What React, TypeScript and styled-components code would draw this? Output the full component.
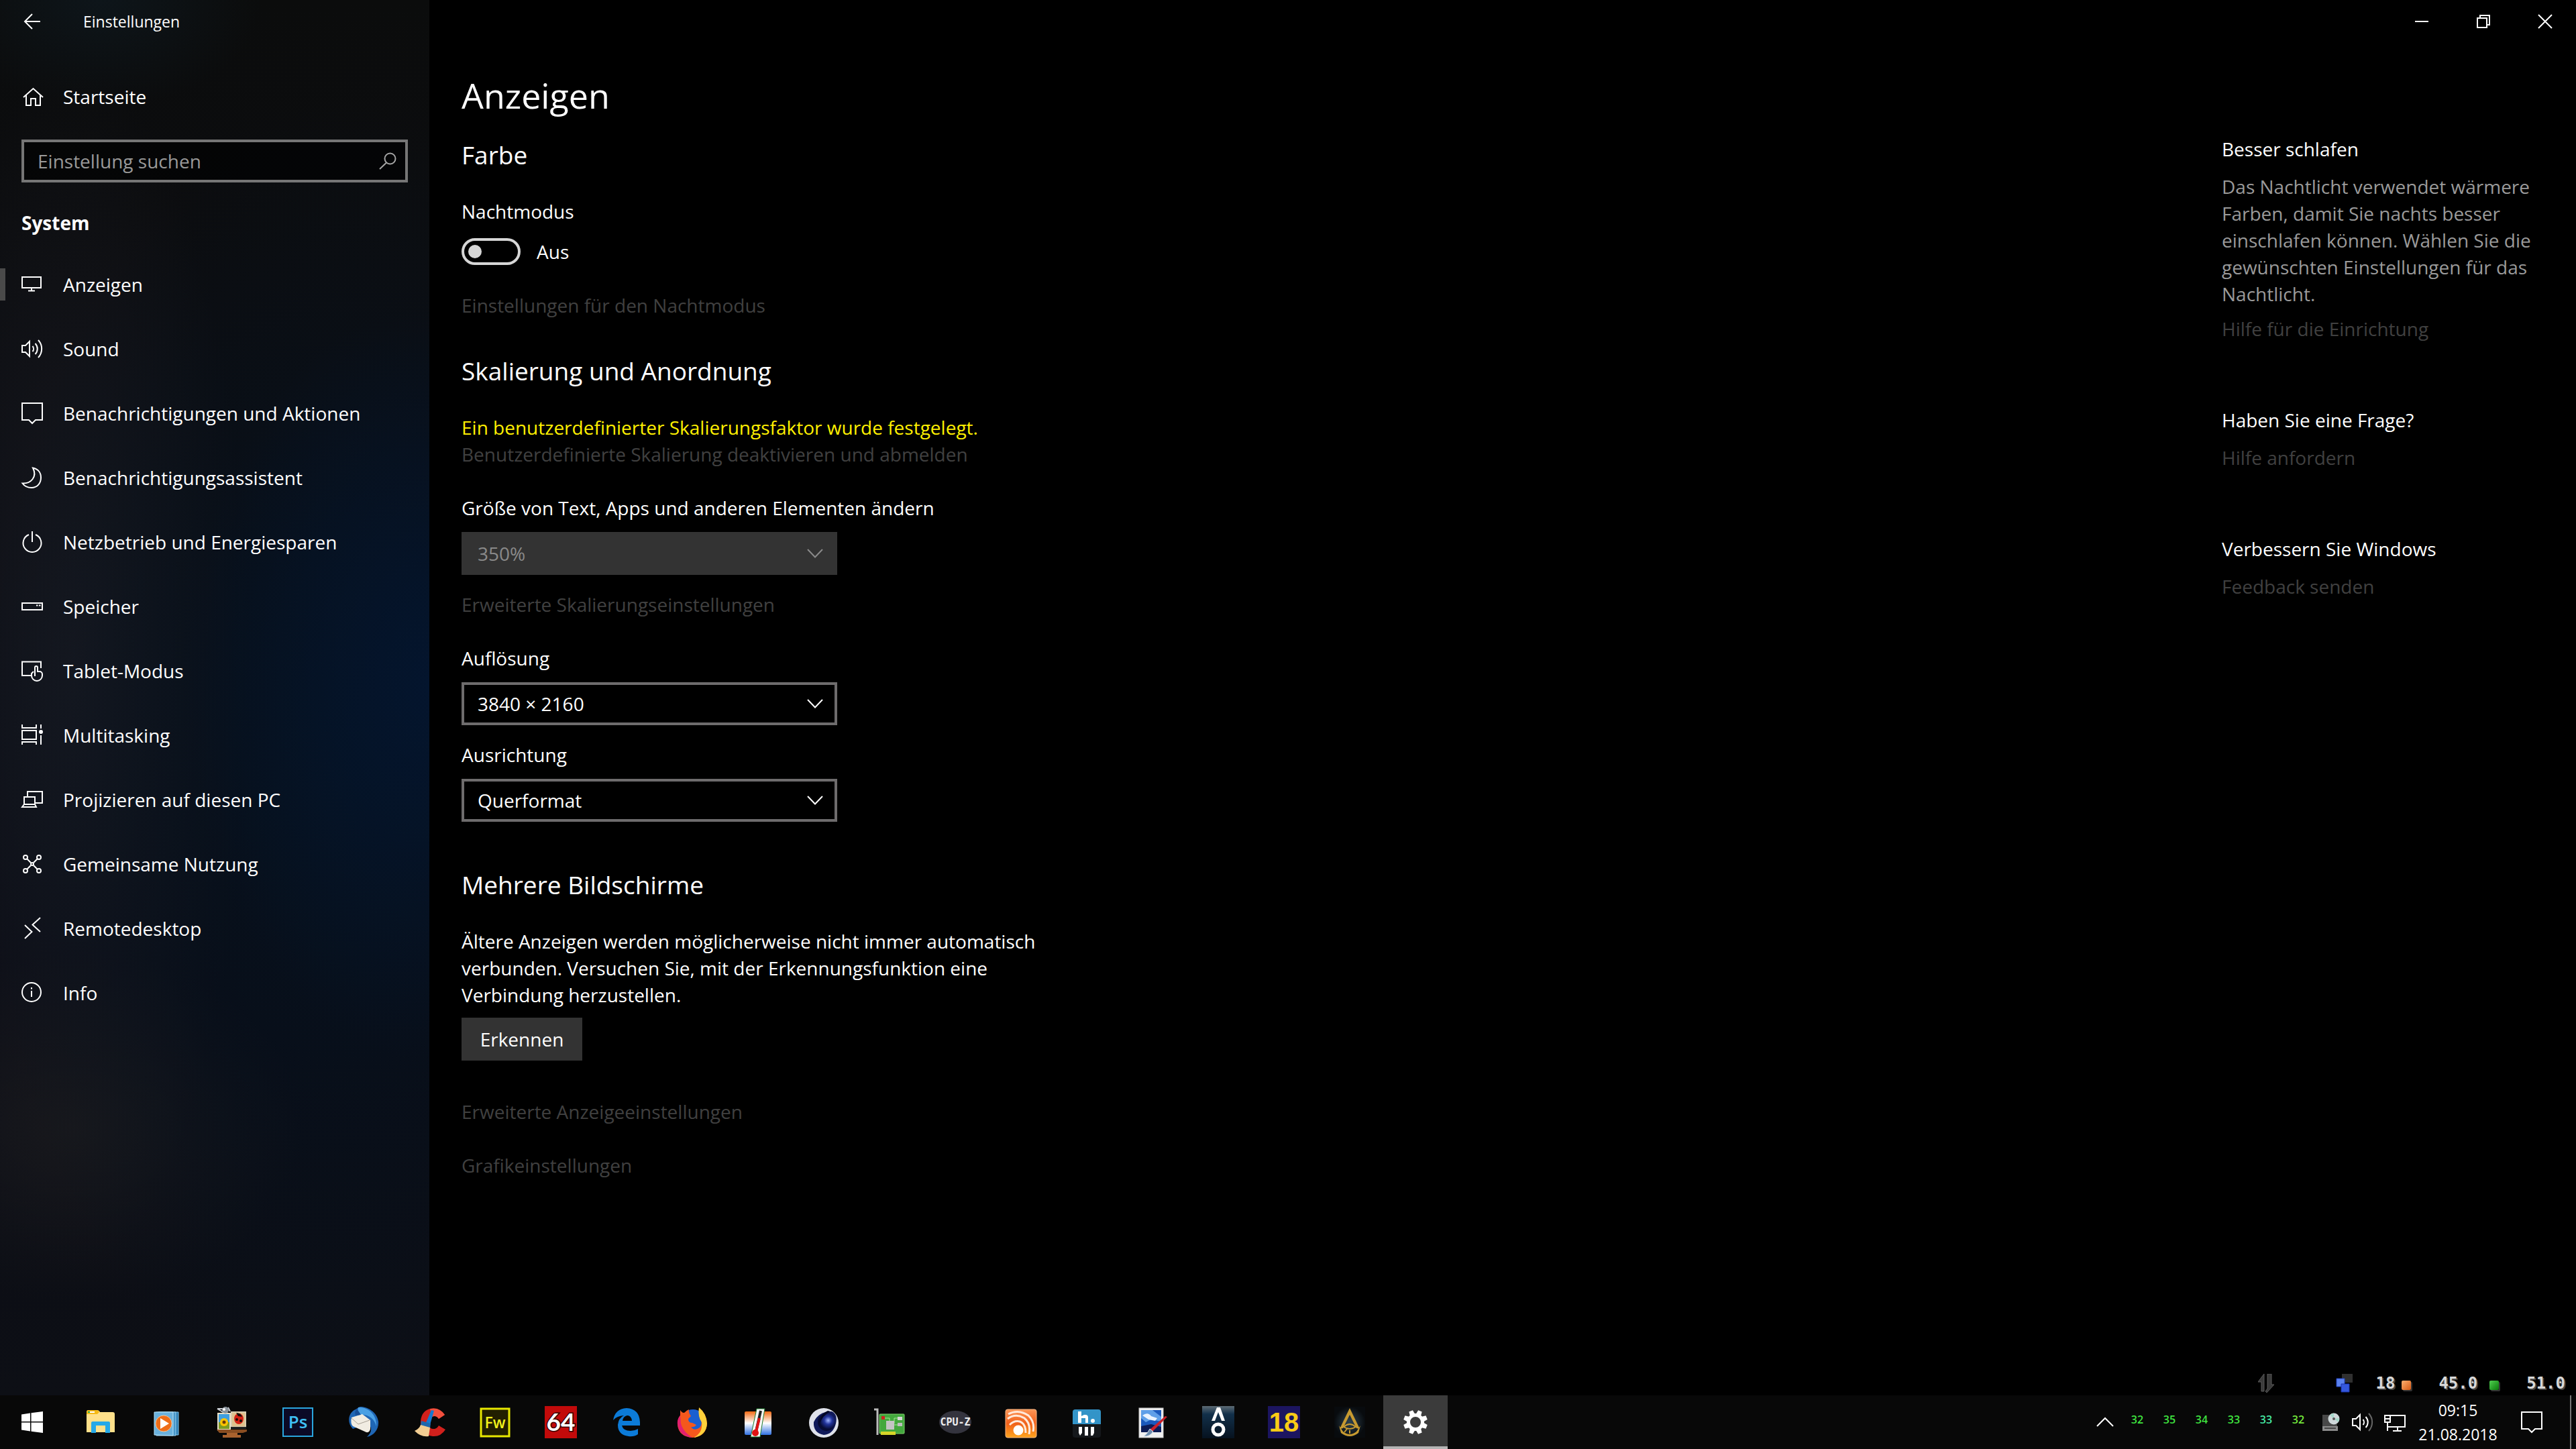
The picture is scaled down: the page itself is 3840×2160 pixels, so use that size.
import React, { useState } from 'react';
import styled, { createGlobalStyle, css } from 'styled-components';

const GlobalStyle = createGlobalStyle`
  * { box-sizing: border-box; }
  html, body, #root { height: 100%; }
  body {
    margin: 0;
    background: #000;
    color: #fff;
    font-family: "Open Sans", "Noto Sans", sans-serif;
    font-size: 28px;
    line-height: 40px;
    overflow: hidden;
  }
  button, input, select { font: inherit; color: inherit; margin: 0; }
  h1, h2, h3, p { margin: 0; font-weight: 400; }
  svg { display: block; flex: none; }
`;

/* ---------- Window frame ---------- */

const Desktop = styled.div`
  display: flex;
  flex-direction: column;
  height: 100vh;
`;

const Window = styled.div`
  flex: 1;
  min-height: 0;
  display: grid;
  grid-template-columns: 640px 1fr;
`;

const Sidebar = styled.aside`
  display: flex;
  flex-direction: column;
  background:
    radial-gradient(ellipse 360px 560px at 640px 1020px, rgba(3, 22, 50, 0.8), transparent),
    radial-gradient(ellipse 560px 1000px at 520px 1150px, rgba(5, 19, 33, 0.75), transparent),
    radial-gradient(ellipse 340px 260px at 110px 1680px, rgba(27, 27, 30, 0.75), transparent),
    radial-gradient(ellipse 260px 900px at 110px 1000px, rgba(27, 28, 35, 0.75), transparent),
    radial-gradient(ellipse 240px 160px at 150px 0, rgba(15, 25, 32, 0.7), transparent),
    linear-gradient(#0b0c0c, #0c0d10 20%, #0a0d15 50%, #0a0c15 75%, #0d0f15);
`;

const TitleBar = styled.header`
  display: flex;
  align-items: center;
  height: 64px;
  flex: none;
`;

const WindowTitle = styled.span`
  margin-left: 28px;
  font-size: 23px;
`;

const FrameButton = styled.button<{ $width: number }>`
  display: flex;
  align-items: center;
  justify-content: center;
  width: ${p => p.$width}px;
  height: 64px;
  padding: 0;
  border: 0;
  background: none;
`;

const WindowControls = styled(TitleBar)`
  justify-content: flex-end;
`;

/* ---------- Sidebar navigation ---------- */

const NavLink = styled.a<{ $current?: boolean; $height: number }>`
  display: flex;
  align-items: center;
  gap: 30px;
  height: ${p => p.$height}px;
  padding-left: 32px;
  color: #fff;
  text-decoration: none;
  ${p => p.$current && css`
    background: linear-gradient(#4a4a4a, #4a4a4a) left center / 8px 48px no-repeat;
  `}
`;

const HomeArea = styled.div`
  padding: 48px 0 32px;
`;

const SearchBox = styled.label`
  display: flex;
  align-items: center;
  height: 64px;
  margin: 0 32px 40px;
  padding: 0 14px 0 20px;
  border: 4px solid #767676;
  background: rgba(0, 0, 0, 0.6);
`;

const SearchInput = styled.input`
  flex: 1;
  min-width: 0;
  padding: 0;
  border: 0;
  outline: 0;
  background: none;
  &::placeholder { color: #999; opacity: 1; }
`;

const NavHeading = styled.h2`
  margin: 0 32px 24px;
  font-size: 28px;
  font-weight: 700;
`;

/* ---------- Main pane ---------- */

const Main = styled.main`
  display: flex;
  flex-direction: column;
  min-width: 0;
`;

const Columns = styled.div`
  flex: 1;
  display: flex;
  justify-content: space-between;
  padding: 42px 48px 0;
`;

const Settings = styled.div`
  width: 880px;
`;

const PageTitle = styled.h1`
  font-size: 52px;
  line-height: 72px;
`;

const Section = styled.section<{ $top: number }>`
  margin-top: ${p => p.$top}px;
`;

const SectionTitle = styled.h2`
  margin-bottom: 40px;
  font-size: 37px;
  line-height: 48px;
`;

const Field = styled.div<{ $top?: number; $gap?: number }>`
  display: flex;
  flex-direction: column;
  gap: ${p => p.$gap || 16}px;
  margin-top: ${p => p.$top || 0}px;
`;

const Warning = styled.p`
  color: #fff000;
`;

const MutedLink = styled.a<{ $top?: number }>`
  display: block;
  margin-top: ${p => p.$top || 0}px;
  color: #404040;
  text-decoration: none;
`;

const ToggleRow = styled.label`
  display: flex;
  align-items: center;
  gap: 24px;
  height: 40px;
`;

const Toggle = styled.input`
  appearance: none;
  display: flex;
  align-items: center;
  width: 88px;
  height: 40px;
  padding: 0 6px;
  border: 4px solid #d6d6d6;
  border-radius: 20px;
  &::before {
    content: "";
    width: 20px;
    height: 20px;
    border-radius: 50%;
    background: #d6d6d6;
  }
  &:checked { justify-content: flex-end; }
`;

const SelectFrame = styled.div<{ $disabled?: boolean }>`
  display: grid;
  align-items: center;
  width: 560px;
  height: 64px;
  color: ${p => (p.$disabled ? '#8a8a8a' : '#fff')};
  border: 4px solid ${p => (p.$disabled ? '#333' : '#6e6c6d')};
  background: ${p => (p.$disabled ? '#333' : '#000')};
  > * { grid-area: 1 / 1; }
  > svg { justify-self: end; margin-right: 17px; pointer-events: none; }
`;

const SelectControl = styled.select`
  appearance: none;
  width: 100%;
  height: 56px;
  padding: 0 56px 0 20px;
  border: 0;
  outline: 0;
  background: none;
  opacity: 1;
`;

const ActionButton = styled.button`
  width: 180px;
  height: 64px;
  margin-top: 14px;
  padding: 0;
  border: 0;
  background: #333;
`;

const HelpColumn = styled.aside`
  width: 480px;
  padding-top: 96px;
`;

const HelpBlock = styled.section`
  margin-bottom: 96px;
`;

const HelpTitle = styled.h3`
  font-size: 28px;
`;

const HelpText = styled.p`
  margin: 16px 0 12px;
  color: #9a9a9a;
`;

/* ---------- Sensor strip above the taskbar ---------- */

const SensorStrip = styled.div`
  display: flex;
  align-items: center;
  justify-content: flex-end;
  height: 36px;
  padding-right: 16px;
  font: 700 24px/36px "DejaVu Sans Mono", monospace;
  color: #d8d8d8;
  text-shadow: 2px 2px 0 #444;
`;

const Sensor = styled.div<{ $left: number; $gap: number }>`
  display: flex;
  align-items: center;
  gap: ${p => p.$gap}px;
  margin-left: ${p => p.$left}px;
`;

const Led = styled.span<{ $from: string; $to: string }>`
  width: 14px;
  height: 14px;
  margin-top: 6px;
  border-radius: 2px;
  background: linear-gradient(135deg, ${p => p.$from}, ${p => p.$to});
  box-shadow: 2px 2px 0 #333;
`;

/* ---------- Taskbar ---------- */

const Taskbar = styled.footer`
  display: flex;
  justify-content: space-between;
  height: 80px;
  flex: none;
  background: #080808;
`;

const AppList = styled.div`
  display: flex;
  gap: 2px;
`;

const AppButton = styled.button<{ $active?: boolean; $start?: boolean }>`
  display: flex;
  align-items: center;
  justify-content: center;
  width: 96px;
  height: 80px;
  margin-right: ${p => (p.$start ? 4 : 0)}px;
  padding: 0;
  border: 0;
  background: ${p => (p.$active ? '#3b3b3b' : 'none')};
  box-shadow: ${p => (p.$active ? 'inset 0 -4px #b4b4b4' : 'none')};
`;

const Tray = styled.div`
  display: flex;
`;

const TrayButton = styled.button<{ $width: number }>`
  display: flex;
  align-items: center;
  justify-content: center;
  width: ${p => p.$width}px;
  padding: 0;
  border: 0;
  background: none;
`;

const Temperature = styled.span<{ $color: string }>`
  width: 48px;
  padding-top: 16px;
  text-align: center;
  color: ${p => p.$color};
  font-size: 16px;
  font-weight: 600;
`;

const Clock = styled.time`
  display: flex;
  flex-direction: column;
  justify-content: center;
  width: 140px;
  text-align: center;
  font-size: 23px;
  line-height: 36px;
`;

const ShowDesktop = styled.button`
  width: 9px;
  margin-left: 17px;
  padding: 0;
  border: 0;
  border-left: 2px solid #777;
  background: none;
`;

/* ---------- Line icons ---------- */

function Line({ size = 32, height, children }: { size?: number; height?: number; children: React.ReactNode }) {
  return (
    <svg width={size} height={height || size} viewBox={`0 0 ${size} ${height || size}`} fill="none"
      stroke="currentColor" strokeWidth="2" overflow="visible" aria-hidden="true">
      {children}
    </svg>
  );
}

const Chevron = () => <Line size={24} height={14}><path d="M1 1 12 12.500 23 1" /></Line>;

const bubble = <path d="M1 1H31V26H21L16 31 11 26H1Z" />;

const navItems: { label: string; icon: React.ReactNode }[] = [
  { label: 'Anzeigen', icon: <path d="M1 5H29V21H1ZM15 21V25M10 25.500H20" /> },
  {
    label: 'Sound',
    icon: <path d="M1 11H6L12 5V27L6 21H1ZM16.500 12A6 6 0 0 1 16.500 20M20.500 8A11.500 11.500 0 0 1 20.500 24M25 3A19 19 0 0 1 25 29" />,
  },
  { label: 'Benachrichtigungen und Aktionen', icon: bubble },
  { label: 'Benachrichtigungsassistent', icon: <path d="M17 1.500C25 3 29 9 29 16 29 25 23 31 15 31 9 31 4 28 1.500 24.500 14 25 24 15 17 1.500Z" /> },
  { label: 'Netzbetrieb und Energiesparen', icon: <path d="M11 5A13.500 13.500 0 1 0 21 5M16 0V16" /> },
  { label: 'Speicher', icon: <path d="M1 11H31V21H1ZM22 14.500H24.500M26 14.500H28.500" /> },
  {
    label: 'Tablet-Modus',
    icon: <path d="M14 23H1V2.500H29V12M20 24V11A2 2 0 0 1 24 11V17H27A4 4 0 0 1 31 21V23A8 8 0 0 1 15 23V20L18 17" />,
  },
  {
    label: 'Multitasking',
    icon: <><path d="M1 0V5H22V0M1 9H22V22H1ZM1 30V26H22V30M29 0V6M29 16V30" /><circle cx="29" cy="11" r="2" fill="currentColor" /></>,
  },
  { label: 'Projizieren auf diesen PC', icon: <path d="M9 11V4H31V21H21M4 23V12H20V23M1 27 4 23H20L22 27Z" /> },
  {
    label: 'Gemeinsame Nutzung',
    icon: <><circle cx="6" cy="6" r="3" /><circle cx="26" cy="6" r="3" /><circle cx="6" cy="26" r="3" /><circle cx="26" cy="26" r="3" /><circle cx="16" cy="16" r="2" /><path d="M8 8 14 14M24 8 18 14M8 24 14 18M24 24 18 18" /></>,
  },
  { label: 'Remotedesktop', icon: <path d="M5 11 15.500 21 5 31M28 0 16.500 10.500 28 21" /> },
  { label: 'Info', icon: <><circle cx="15" cy="15" r="14" /><path d="M15 13V22M15 8V10.500" /></> },
];

/* ---------- Taskbar app artwork ---------- */

const Art = ({ children }: { children: React.ReactNode }) => (
  <svg width="48" height="48" viewBox="0 0 48 48" aria-hidden="true">{children}</svg>
);

const TileText = ({ fill, size = 24, y = 33, children, family = 'Open Sans', weight = 600, stroke }:
  { fill: string; size?: number; y?: number; children: string; family?: string; weight?: number; stroke?: string }) => (
  <text x="24" y={y} textAnchor="middle" fill={fill} fontFamily={`"${family}", sans-serif`} fontSize={size} fontWeight={weight}
    stroke={stroke} strokeWidth={stroke ? 3 : 0} paintOrder="stroke">{children}</text>
);

const apps: { name: string; art: React.ReactNode }[] = [
  {
    name: 'Explorer',
    art: <Art><path d="M3 9Q3 6 6 6H18Q22 6 23 9H42Q45 9 45 12V39H3Z" fill="#ffe08a" /><path d="M3 9Q3 6 6 6H18Q21 6 22 9L19 12H3Z" fill="#f5b916" /><path d="M5 8H15V10H5Z" fill="#fff" /><path d="M5 8H8V10H5Z" fill="#27b45a" /><path d="M10 25Q10 23 12 23H36Q38 23 38 25V40H31V29H17V40H10Z" fill="#26a9e8" /></Art>,
  },
  {
    name: 'Media Player',
    art: <Art><path d="M12 9H42V43H12Z" fill="#2d7eb5" stroke="#7fc4ea" /><path d="M9 9H38V44H9Z" fill="#4796c9" stroke="#9bd2f0" /><path d="M6 9H34V44L6 43Z" fill="#69b1dd" stroke="#b7e2f7" /><circle cx="20" cy="26" r="12" fill="#ee6d18" stroke="#ffc08a" /><path d="M15 18 28 26 15 34Z" fill="#fff" /></Art>,
  },
  {
    name: 'Fotoanzeige',
    art: <Art><path d="M2 4 12 10M18 2 21 8M2 4H14" stroke="#c8ccd2" strokeWidth="2" fill="none" /><path d="M2 10H22V37H2Z" fill="#e8e0c8" /><path d="M4 12H20V34H4Z" fill="#3f9fe0" /><path d="M4 24H20V34H4Z" fill="#7d9b22" /><circle cx="12" cy="24" r="6" fill="#ffc400" /><circle cx="12" cy="24" r="2.500" fill="#6b3a08" /><path d="M22 8H45V34H22Z" fill="#d8ccb0" /><path d="M24 10H43V30H24Z" fill="#dfc08c" /><ellipse cx="34" cy="19" rx="7" ry="8" fill="#d42114" /><path d="M30 10Q37 10 39 16L33 15Z" fill="#15100d" /><circle cx="31" cy="20" r="2" fill="#1a0d0a" /><circle cx="37" cy="22" r="2" fill="#1a0d0a" /><path d="M22 31H45V34H22Z" fill="#222" /><path d="M1 35H46V38L40 40H5Z" fill="#8a4e22" /><path d="M16 40H32V43H37V47H10V43H16Z" fill="#a9622e" /><circle cx="14" cy="6" r="5" fill="#8b949c" /><circle cx="12" cy="5" r="2" fill="#fff" /></Art>,
  },
  {
    name: 'Photoshop',
    art: <Art><rect x="2" y="3" width="44" height="42" fill="#0b0a26" stroke="#2aa6de" strokeWidth="2" /><TileText fill="#3fc0f2" size={26}>Ps</TileText></Art>,
  },
  {
    name: 'Thunderbird',
    art: <Art><path d="M19 1C29 1 44 8 46 23 47 34 40 44 29 46 38 38 36 30 30 26L8 34C-2 24 2 9 12 5 16 3 15 2 19 1Z" fill="#1f66b5" /><path d="M16 2C30 1 44 12 43 30 40 19 32 11 15 13Z" fill="#4aa0e4" /><path d="M6 17 22 12 34 21V34Q33 40 28 39L8 30Q4 26 6 17Z" fill="#f1ece2" /><path d="M6 18 16 27 33 21" fill="none" stroke="#a79f94" /><path d="M14 4Q10 8 12 14L20 13Z" fill="#184f97" /></Art>,
  },
  {
    name: 'CCleaner',
    art: <Art><path d="M47 13 38 19Q34 13 28 16 22 20 23 27 24 35 32 34 36 33 38 29L48 35Q41 46 29 45 13 43 11 28 10 8 25 4 39 1 47 13Z" fill="#d1201c" /><path d="M25 4Q39 1 47 13L38 19Q34 13 28 16Z" fill="#f1503e" /><path d="M27 6 31 7 25 28 18 27Z" fill="#1679cf" /><path d="M12 22 26 26 25 33 11 29Z" fill="#1e66ad" /><path d="M11 28 25 32 23 45Q12 47 2 37 9 34 11 28Z" fill="#f2cd93" /></Art>,
  },
  {
    name: 'Fireworks',
    art: <Art><rect x="3" y="4" width="42" height="41" fill="#221f00" stroke="#e8e800" strokeWidth="3" /><TileText fill="#f2f21c" size={23}>Fw</TileText></Art>,
  },
  {
    name: 'AIDA64',
    art: <Art><rect width="48" height="48" fill="#c20a0a" /><TileText fill="#fff" size={37} y={37} family="Lato" weight={700} stroke="#3a0000">64</TileText></Art>,
  },
  {
    name: 'Edge',
    art: <Art><path d="M4 21Q7 4 24 3 43 4 44 24V29H17Q19 37 30 37 36 37 41 34V42Q35 46 27 45 11 43 11 28 12 18 20 14 9 15 4 21ZM18 22H32Q31 14 25 14 19 15 18 22Z" fill="#0c7bd8" fillRule="evenodd" /></Art>,
  },
  {
    name: 'Firefox',
    art: <Art><circle cx="25" cy="23" r="18" fill="#1a5fd0" /><path d="M6 6Q8 10 12 10 16 6 19 5 18 10 22 15L18 19Q18 25 24 25L30 28Q27 32 22 31 27 38 35 32 39 28 37 22 33 12 34 3 45 10 46 26 45 45 25 47 3 46 2 27 2 18 6 14Z" fill="#f4581d" /><path d="M34 2Q45 11 46 26 45 44 26 47 40 40 38 24 32 16 34 2Z" fill="#ffd13b" /><path d="M6 14Q1 20 2 27 4 45 24 47 10 38 7 26Z" fill="#e3206f" /></Art>,
  },
  {
    name: 'Core Temp',
    art: <Art><defs><linearGradient id="temp" x2="0" y2="1"><stop stopColor="#f46a14" /><stop offset=".5" stopColor="#fff" /><stop offset="1" stopColor="#2f70e2" /></linearGradient></defs><rect x="4" y="8" width="40" height="35" rx="2" fill="url(#temp)" /><path d="M22 4H34L27 46H13Z" fill="#f7f7f7" stroke="#1c7a2c" /><path d="M28 7 21 38" stroke="#222" strokeWidth="4" /><path d="M26 18 21 38" stroke="#e01414" strokeWidth="4" /><circle cx="20" cy="40" r="5" fill="#e01414" /></Art>,
  },
  {
    name: 'Cinema 4D',
    art: <Art><defs><radialGradient id="c4d" cx=".6" cy=".4"><stop stopColor="#9fb4ff" /><stop offset=".45" stopColor="#22349c" /><stop offset="1" stopColor="#060b33" /></radialGradient></defs><circle cx="24" cy="25" r="22" fill="#dfe2ea" /><path d="M36 8Q16 8 9 24 8 40 24 43 38 42 42 26 45 12 36 8Z" fill="#101a5a" /><circle cx="28" cy="24" r="13" fill="url(#c4d)" /><path d="M34 8Q22 14 18 26 18 12 30 7Z" fill="#000624" /></Art>,
  },
  {
    name: 'GPU-Z',
    art: <Art><path d="M1 5H6V43" fill="none" stroke="#bcbcbc" strokeWidth="3" /><rect x="9" y="12" width="37" height="29" rx="1" fill="#43a83d" stroke="#7ed36d" /><path d="M11 38H33V43H11Z" fill="#d6d528" /><path d="M15 18H24V24M38 18H31V26M38 28H30" stroke="#a7ec94" fill="none" /><rect x="19" y="22" width="12" height="13" fill="#c4c4c4" /><rect x="12" y="15" width="5" height="5" fill="#cc2420" /><rect x="36" y="16" width="7" height="5" fill="#d6d6d6" /><rect x="36" y="25" width="7" height="5" fill="#bdbdbd" /></Art>,
  },
  {
    name: 'CPU-Z',
    art: <Art><ellipse cx="24" cy="24" rx="24" ry="17" fill="#34343e" /><TileText fill="#eee" size={15} y={29} family="DejaVu Sans Mono" weight={700}>CPU-Z</TileText></Art>,
  },
  {
    name: 'RSS',
    art: <Art><defs><linearGradient id="rss" x2="0" y2="1"><stop stopColor="#ff9656" /><stop offset=".5" stopColor="#f0601a" /><stop offset="1" stopColor="#ffa51e" /></linearGradient></defs><rect x="1" y="5" width="46" height="42" rx="3" fill="url(#rss)" stroke="#ffb985" /><circle cx="20" cy="36" r="7.500" fill="#fff" /><path d="M7 28Q14 21 22 23 31 26 31 40M4 19Q16 10 29 18 39 26 36 42M5 12Q20 4 35 14 45 24 42 38" stroke="#ffe9da" strokeWidth="3" fill="none" /></Art>,
  },
  {
    name: 'HWiNFO',
    art: <Art><rect x="3" y="5" width="42" height="42" rx="4" fill="#15181b" /><path d="M7 5H41Q45 5 45 9V27H3V9Q3 5 7 5Z" fill="#3394c8" /><path d="M11 8H16V25H11ZM20 13H22Q26 13 26 17V25H22V18H16V15Z" fill="#fff" /><circle cx="33" cy="22" r="3" fill="#fff" /><path d="M12 31H17V40L14 44 12 40ZM21 31H26V44H21ZM30 31H35V40L33 44 30 44Z" fill="#fff" /></Art>,
  },
  {
    name: 'Bildbearbeitung',
    art: <Art><rect x="4" y="3" width="36" height="44" fill="#f0f0f0" stroke="#c8c8c8" /><rect x="7" y="6" width="30" height="33" fill="#1a59bd" /><path d="M7 6H24L37 16V23L22 20 14 24 7 18Z" fill="#5f9fe8" /><path d="M9 14Q17 8 22 15L31 18 28 22 18 20Z" fill="#eaf3ff" /><path d="M7 30 22 27 37 31V39H7Z" fill="#0c1c56" /><path d="M46 16 24 38 20 35 43 15Z" fill="#c9202a" /><path d="M20 34 25 38Q20 46 11 45 17 41 20 34Z" fill="#6d8cae" stroke="#dbe5ec" /></Art>,
  },
  {
    name: 'AO Tennis',
    art: <Art><defs><linearGradient id="ao" x2="0" y2="1"><stop stopColor="#5d6b74" /><stop offset=".25" stopColor="#12304a" /><stop offset="1" stopColor="#06121f" /></linearGradient></defs><rect width="48" height="48" fill="url(#ao)" /><path d="M14 22 22 2H27L34 22H29L24 9 19 22Z" fill="#fff" /><circle cx="24" cy="35" r="8" fill="none" stroke="#fff" strokeWidth="5" /></Art>,
  },
  {
    name: 'Fußball 18',
    art: <Art><rect width="48" height="48" fill="#1c1560" /><TileText fill="#f9cb16" size={40} y={38} family="Liberation Sans Narrow" weight={700}>18</TileText></Art>,
  },
  {
    name: 'Assassin’s Creed',
    art: <Art><defs><radialGradient id="ac"><stop stopColor="#2d4250" /><stop offset="1" stopColor="#080b0e" /></radialGradient></defs><rect x="1" y="1" width="46" height="46" fill="url(#ac)" /><path d="M24 3 39 34 34 33 24 13 14 33 9 34ZM8 29 14 38Q24 46 34 38L40 29 37 40Q24 50 11 40Z" fill="#c79a30" /><path d="M15 31Q24 23 33 31 24 37 15 31ZM24 36V41M20 34 16 39" fill="none" stroke="#c79a30" strokeWidth="2" /></Art>,
  },
];

const Gear = () => (
  <Art>
    <circle cx="24" cy="24" r="10.500" fill="none" stroke="#fff" strokeWidth="5" />
    {[0, 1, 2, 3, 4, 5, 6, 7].map(i => (
      <path key={i} d="M21 6H27L28 13H20Z" fill="#fff" transform={`rotate(${22.5 + i * 45} 24 24)`} />
    ))}
  </Art>
);

const temperatures: [string, string][] = [
  ['32', '#3fe23f'], ['35', '#3fe23f'], ['34', '#3fe23f'], ['33', '#3fe23f'], ['33', '#46e8a4'], ['32', '#74e83c'],
];

interface DropdownProps { id: string; label: string; value: string; disabled?: boolean; top?: number }

function Dropdown({ id, label, value, disabled, top }: DropdownProps) {
  return (
    <Field $top={top}>
      <label htmlFor={id}>{label}</label>
      <SelectFrame $disabled={disabled}>
        <SelectControl id={id} disabled={disabled} defaultValue={value}>
          <option>{value}</option>
        </SelectControl>
        <Chevron />
      </SelectFrame>
    </Field>
  );
}

export default function App() {
  const [night, setNight] = useState(false);

  return (
    <Desktop>
      <GlobalStyle />
      <Window>
        <Sidebar>
          <TitleBar>
            <FrameButton $width={96} aria-label="Zurück">
              <Line size={24}><path d="M24 12H1M12 1 1 12 12 23" /></Line>
            </FrameButton>
            <WindowTitle>Einstellungen</WindowTitle>
          </TitleBar>
          <HomeArea>
            <NavLink href="#start" $height={64}>
              <Line><path d="M3 17 17.500 4 32 17M7 14V29H14V19H21V29H28V14" /></Line>
              Startseite
            </NavLink>
          </HomeArea>
          <SearchBox>
            <SearchInput type="text" placeholder="Einstellung suchen" aria-label="Einstellung suchen" />
            <svg width="24" height="24" fill="none" stroke="#a6a6a6" strokeWidth="2" overflow="visible" aria-hidden="true">
              <circle cx="15.500" cy="8.500" r="8" /><path d="M10 14.500 0 24" />
            </svg>
          </SearchBox>
          <NavHeading>System</NavHeading>
          <nav>
            {navItems.map((item, i) => (
              <NavLink key={item.label} href={`#${i}`} $height={96} $current={i === 0}>
                <Line>{item.icon}</Line>
                {item.label}
              </NavLink>
            ))}
          </nav>
        </Sidebar>

        <Main>
          <WindowControls>
            <FrameButton $width={92} aria-label="Minimieren"><Line size={20}><path d="M0 10H20" /></Line></FrameButton>
            <FrameButton $width={92} aria-label="Verkleinern"><Line size={20}><path d="M1 5H15V19H1ZM5 5V1H19V15H15" /></Line></FrameButton>
            <FrameButton $width={92} aria-label="Schließen"><Line size={20}><path d="M0 0 20 20M20 0 0 20" /></Line></FrameButton>
          </WindowControls>

          <Columns>
            <Settings>
              <PageTitle>Anzeigen</PageTitle>

              <Section $top={29}>
                <SectionTitle>Farbe</SectionTitle>
                <Field $gap={20}>
                  <span id="night-label">Nachtmodus</span>
                  <ToggleRow>
                    <Toggle type="checkbox" role="switch" aria-labelledby="night-label" checked={night}
                      onChange={e => setNight(e.target.checked)} />
                    {night ? 'Ein' : 'Aus'}
                  </ToggleRow>
                </Field>
                <MutedLink href="#nacht" $top={40}>Einstellungen für den Nachtmodus</MutedLink>
              </Section>

              <Section $top={54}>
                <SectionTitle>Skalierung und Anordnung</SectionTitle>
                <Warning>Ein benutzerdefinierter Skalierungsfaktor wurde festgelegt.</Warning>
                <MutedLink href="#abmelden">Benutzerdefinierte Skalierung deaktivieren und abmelden</MutedLink>
                <Dropdown id="scale" label="Größe von Text, Apps und anderen Elementen ändern" value="350%" disabled top={40} />
                <MutedLink href="#skalierung" $top={24}>Erweiterte Skalierungseinstellungen</MutedLink>
                <Dropdown id="resolution" label="Auflösung" value="3840 × 2160" top={40} />
                <Dropdown id="orientation" label="Ausrichtung" value="Querformat" top={24} />
              </Section>

              <Section $top={70}>
                <SectionTitle>Mehrere Bildschirme</SectionTitle>
                <p>
                  Ältere Anzeigen werden möglicherweise nicht immer automatisch verbunden. Versuchen Sie, mit der
                  Erkennungsfunktion eine Verbindung herzustellen.
                </p>
                <ActionButton>Erkennen</ActionButton>
                <MutedLink href="#anzeige" $top={56}>Erweiterte Anzeigeeinstellungen</MutedLink>
                <MutedLink href="#grafik" $top={40}>Grafikeinstellungen</MutedLink>
              </Section>
            </Settings>

            <HelpColumn>
              <HelpBlock>
                <HelpTitle>Besser schlafen</HelpTitle>
                <HelpText>
                  Das Nachtlicht verwendet wärmere Farben, damit Sie nachts besser einschlafen können. Wählen Sie die
                  gewünschten Einstellungen für das Nachtlicht.
                </HelpText>
                <MutedLink href="#einrichtung">Hilfe für die Einrichtung</MutedLink>
              </HelpBlock>
              <HelpBlock>
                <HelpTitle>Haben Sie eine Frage?</HelpTitle>
                <MutedLink href="#hilfe" $top={16}>Hilfe anfordern</MutedLink>
              </HelpBlock>
              <HelpBlock>
                <HelpTitle>Verbessern Sie Windows</HelpTitle>
                <MutedLink href="#feedback" $top={16}>Feedback senden</MutedLink>
              </HelpBlock>
            </HelpColumn>
          </Columns>

          <SensorStrip>
            <svg width="24" height="28" aria-hidden="true">
              <path d="M0 12 9 0V26H5V12ZM14 0H20V16H24L13 28 11 26 14 22Z" fill="#3a3a3a" stroke="#5a5a5a" />
            </svg>
            <Sensor $left={92} $gap={34}>
              <svg width="26" height="28" aria-hidden="true">
                <path d="M9 0H25V13H9Z" fill="#303030" />
                <path d="M1 7H13V19H1Z" fill="#5a82f0" stroke="#2444c0" /><path d="M8 15H20V27H8Z" fill="#3558dc" stroke="#1a34b0" />
              </svg>
              18
            </Sensor>
            <Sensor $left={10} $gap={41}><Led $from="#ffb070" $to="#d85a14" />45.0</Sensor>
            <Sensor $left={18} $gap={41}><Led $from="#50d050" $to="#0a7a0a" />51.0</Sensor>
          </SensorStrip>
        </Main>
      </Window>

      <Taskbar>
        <AppList>
          <AppButton $start aria-label="Start">
            <svg width="32" height="32" fill="#fff" aria-hidden="true">
              <path d="M0 4.500 13 2.500V15H0ZM14.500 2.300 32 0V15H14.500ZM0 16.500H13V29.500L0 27.500ZM14.500 16.500H32V32L14.500 29.700Z" />
            </svg>
          </AppButton>
          {apps.map(app => <AppButton key={app.name} aria-label={app.name}>{app.art}</AppButton>)}
          <AppButton $active aria-label="Einstellungen"><Gear /></AppButton>
        </AppList>

        <Tray>
          <TrayButton $width={48} aria-label="Ausgeblendete Symbole"><Line size={26} height={14}><path d="M1 13 13 1 25 13" /></Line></TrayButton>
          {temperatures.map(([value, color], i) => <Temperature key={i} $color={color}>{value}</Temperature>)}
          <TrayButton $width={48} aria-label="Laufwerk">
            <svg width="28" height="28" aria-hidden="true">
              <path d="M2 3H20L24 19V27H2Z" fill="#484848" /><path d="M2 20H25V27H2Z" fill="#8c8c8c" /><path d="M5 23H22" stroke="#444" strokeWidth="2" />
              <circle cx="19" cy="9" r="8.500" fill="#cfd8da" /><path d="M19 9 13 3 19 .5ZM19 9 26 14 27 8Z" fill="#a5d8c9" /><circle cx="19" cy="9" r="2" fill="#555" />
            </svg>
          </TrayButton>
          <TrayButton $width={48} aria-label="Lautstärke">
            <Line><path d="M1 11H6L12 5V27L6 21H1ZM16.500 12A6 6 0 0 1 16.500 20M20.500 8A11.500 11.500 0 0 1 20.500 24" /><path d="M25 3A19 19 0 0 1 25 29" stroke="#666" /></Line>
          </TrayButton>
          <TrayButton $width={48} aria-label="Netzwerk">
            <Line><path d="M10 6H31V23H5M1 6H9V16H1ZM5 16V29M1 11H9M20 23V29M13 29H26" /></Line>
          </TrayButton>
          <Clock><span>09:15</span><span>21.08.2018</span></Clock>
          <TrayButton $width={80} aria-label="Info-Center"><Line>{bubble}</Line></TrayButton>
          <ShowDesktop aria-label="Desktop anzeigen" />
        </Tray>
      </Taskbar>
    </Desktop>
  );
}
